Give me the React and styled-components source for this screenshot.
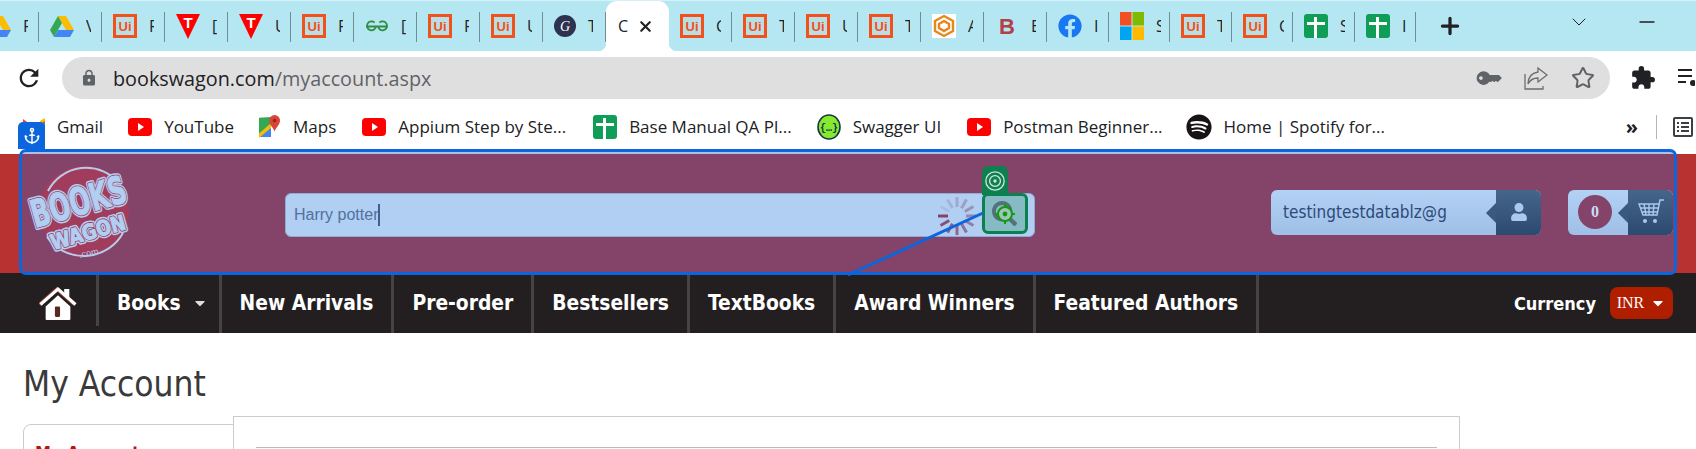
import React from 'react';
import styled, { createGlobalStyle } from 'styled-components';
import { Anchor, Minus, Plus, Star, X, ChevronDown } from 'lucide-react';
import { FaKey, FaSpotify, FaUser, FaFacebook, FaCaretDown, FaSearch } from 'react-icons/fa';
import { MdExtension, MdLock, MdRefresh } from 'react-icons/md';

const GlobalStyle = createGlobalStyle`
  html, body { margin: 0; padding: 0; background: #fff; overflow: hidden; }
  body { font-family: "Open Sans", "Liberation Sans", sans-serif; }
`;

const Page = styled.div`
  position: relative;
  width: 1696px;
  height: 449px;
  overflow: hidden;
`;

/* browser chrome */
const TabStrip = styled.div`
  display: flex;
  align-items: center;
  height: 51px;
  margin-left: -24px;
  width: 1720px;
  background: #b5e7f3;
  border-top: 1px solid #d6f1f7;
  box-sizing: border-box;
`;

const Tab = styled.div`
  position: relative;
  flex: none;
  display: flex;
  align-items: center;
  box-sizing: border-box;
  width: ${p => p.$w || 63}px;
  height: 50px;
  padding: 0 0 0 11px;
  color: #202124;
  font-size: 16px;
  ${p => !p.$active && `
    &::after {
      content: '';
      position: absolute;
      right: 0;
      top: 11px;
      width: 1px;
      height: 30px;
      background: #6f8d95;
    }
  `}
  ${p => p.$active && `
    background: #fff;
    border-radius: 11px 11px 0 0;
    &::before, &::after {
      content: '';
      position: absolute;
      bottom: 0;
      width: 8px;
      height: 8px;
    }
    &::before { left: -8px; background: radial-gradient(circle at 0 0, transparent 8px, #fff 8.5px); }
    &::after { right: -8px; background: radial-gradient(circle at 100% 0, transparent 8px, #fff 8.5px); }
  `}
`;

const TabLabel = styled.span`
  display: block;
  flex: none;
  width: ${p => (p.$active ? 11 : 5)}px;
  margin-left: ${p => (p.$active ? 1 : 12)}px;
  overflow: hidden;
  white-space: nowrap;
  line-height: 18px;
`;

const CloseIcon = styled(X)`
  margin-left: 8px;
  flex: none;
  color: #202124;
`;

const NewTab = styled(Plus)`
  flex: none;
  margin-left: 21px;
  color: #202124;
`;

const WindowControls = styled.div`
  display: flex;
  align-items: center;
  margin-left: 104px;
  gap: 44px;
  color: #202124;
  position: relative;
  top: -4px;
`;

const AddressRow = styled.div`
  display: flex;
  align-items: center;
  height: 48px;
  box-sizing: border-box;
  padding: 6px 0 0 15px;
`;

const Omnibox = styled.div`
  display: flex;
  align-items: center;
  box-sizing: border-box;
  width: 1548px;
  height: 42px;
  margin-left: 19px;
  padding: 0 15px 0 18px;
  border-radius: 21px;
  background: #dfdfdf;
  color: #5f6368;
`;

const Url = styled.div`
  margin-left: 15px;
  font-size: 19.8px;
  color: #5f6368;
  flex: 1;
  b { font-weight: 400; color: #202124; }
`;

const OmniIcons = styled.div`
  display: flex;
  align-items: center;
  gap: 26px;
`;

const OmniStar = styled(Star)`
  margin-left: -3px;
`;

const ToolIcons = styled.div`
  display: flex;
  align-items: center;
  gap: 22px;
  margin-left: 20px;
  color: #202124;
`;

const BookmarkBar = styled.div`
  display: flex;
  align-items: center;
  height: 55px;
  padding-left: 23px;
  box-sizing: border-box;
`;

const Bookmark = styled.div`
  display: flex;
  align-items: center;
  gap: 12px;
  margin-right: ${p => p.$gap || 26}px;
  font-size: 17px;
  color: #202124;
  white-space: nowrap;
`;

const BarEnd = styled.div`
  display: flex;
  align-items: center;
  margin-left: auto;
  padding-right: 3px;
  color: #202124;
  font-size: 20px;
  font-weight: 700;
`;

const BarDivider = styled.span`
  width: 1px;
  height: 24px;
  margin: 0 16px 0 18px;
  background: #b5b5b5;
`;

/* site header */
const Header = styled.header`
  height: 119px;
  background: #b83232;
`;

const HeaderInner = styled.div`
  position: relative;
  z-index: 2;
  display: flex;
  align-items: center;
  height: 100%;
  padding-left: 23px;
  box-sizing: border-box;
`;

const LogoWrap = styled.div`
  flex: none;
  width: 112px;
  height: 100px;
  margin-top: -2px;
`;

const SearchBox = styled.div`
  position: relative;
  flex: none;
  display: flex;
  align-items: center;
  box-sizing: border-box;
  width: 750px;
  height: 44px;
  margin: 3px 0 0 150px;
  padding-left: 8px;
  background: #b0cff3;
  border: 1px solid #8eabd0;
  border-radius: 6px;
  color: #53709f;
  font: 16px "Liberation Sans", sans-serif;
`;

const Caret = styled.span`
  width: 2px;
  height: 22px;
  background: #3f5f92;
`;

const SpinnerWrap = styled.svg`
  position: absolute;
  left: 651px;
  top: 2px;
`;

const TargetBox = styled.div`
  position: absolute;
  z-index: 4;
  right: 6px;
  top: -1px;
  width: 46px;
  height: 41px;
  box-sizing: border-box;
  display: flex;
  align-items: center;
  justify-content: center;
  background: #85bcc4;
  border: 3px solid #0d8050;
  border-radius: 6px;
`;

const TargetTab = styled.div`
  position: absolute;
  z-index: 3;
  right: 26px;
  top: -28px;
  width: 26px;
  height: 29px;
  display: flex;
  align-items: center;
  justify-content: center;
  background: #0d8050;
  border-radius: 6px 6px 0 0;
`;

const MagnifierWrap = styled.div`
  position: relative;
  width: 26px;
  height: 26px;
  color: #55707f;
  svg { position: absolute; left: 0; top: 0; }
`;

const Pill = styled.div`
  flex: none;
  display: flex;
  box-sizing: border-box;
  height: 45px;
  width: ${p => p.$width}px;
  margin-left: ${p => p.$left}px;
  margin-top: -3px;
  border-radius: 6px;
  overflow: hidden;
  background: linear-gradient(#b2d1f5, #a0bfe6);
`;

const PillBody = styled.div`
  flex: 1;
  display: flex;
  align-items: center;
  padding-left: ${p => p.$pad}px;
  color: #2d4a78;
  font: 17px "DejaVu Sans Condensed", "DejaVu Sans", sans-serif;
`;

const PillEnd = styled.div`
  position: relative;
  flex: none;
  display: flex;
  align-items: center;
  justify-content: center;
  width: 45px;
  color: #a9c9ee;
  background: linear-gradient(#46658b, #2c4a70);
  &::before {
    content: '';
    position: absolute;
    left: -10px;
    top: 13px;
    border-style: solid;
    border-width: 10px 10px 10px 0;
    border-color: transparent #3a597f transparent transparent;
  }
`;

const CartCount = styled.div`
  width: 34px;
  height: 34px;
  border-radius: 50%;
  background: #84446a;
  color: #c9dcf3;
  display: flex;
  align-items: center;
  justify-content: center;
  font: 700 16px "Liberation Serif", serif;
`;

const Highlight = styled.div`
  position: absolute;
  z-index: 1;
  left: 19px;
  top: 149px;
  width: 1658px;
  height: 126px;
  box-sizing: border-box;
  border: 3px solid #0b66dd;
  border-radius: 7px;
  background: rgba(54, 95, 190, 0.4);
`;

const AnchorBadge = styled.div`
  position: absolute;
  z-index: 5;
  left: 18px;
  top: 122px;
  width: 27px;
  height: 27px;
  display: flex;
  align-items: center;
  justify-content: center;
  background: #0b66dd;
  border-radius: 5px 5px 0 0;
  color: #fff;
`;

const LinkLine = styled.svg`
  position: absolute;
  z-index: 5;
  left: 840px;
  top: 205px;
`;

/* nav */
const Nav = styled.nav`
  display: flex;
  align-items: stretch;
  height: 60px;
  background: #231f20;
  color: #fff;
  font: 700 20.8px "DejaVu Sans Condensed", "DejaVu Sans", sans-serif;
`;

const HomeCell = styled.div`
  flex: none;
  width: 99px;
  height: 53px;
  box-sizing: border-box;
  display: flex;
  align-items: center;
  padding: 7px 0 0 39px;
  border-right: 3px solid #444;
`;

const NavItem = styled.div`
  flex: none;
  display: flex;
  align-items: center;
  gap: 11px;
  padding: 0 ${p => p.$right ?? 18}px 0 18px;
  border-right: 3px solid #444;
  white-space: nowrap;
`;

const Currency = styled.div`
  margin-left: auto;
  display: flex;
  align-items: center;
  gap: 14px;
  padding-right: 23px;
  font-size: 18px;
`;

const CurrencyButton = styled.div`
  display: flex;
  align-items: center;
  justify-content: center;
  gap: 6px;
  width: 63px;
  height: 32px;
  border-radius: 8px;
  background: #b01e00;
  font: 400 16px "Liberation Serif", serif;
`;

/* page body */
const Main = styled.main`
  padding-left: 23px;
`;

const Title = styled.h1`
  margin: 0;
  height: 83px;
  padding-top: 29px;
  box-sizing: border-box;
  font: 400 35px/44px "DejaVu Sans Condensed", "DejaVu Sans", sans-serif;
  color: #3a3a3a;
`;

const Columns = styled.div`
  display: flex;
  align-items: flex-start;
`;

const SideCard = styled.div`
  flex: none;
  width: 230px;
  height: 100px;
  margin-top: 8px;
  box-sizing: border-box;
  padding: 18px 0 0 11px;
  border: 1px solid #ccc;
  border-radius: 8px 0 0 0;
  color: #b01818;
  font: 700 16px "DejaVu Sans", sans-serif;
`;

const ContentPanel = styled.div`
  position: relative;
  flex: none;
  width: 1227px;
  height: 120px;
  margin-left: -20px;
  box-sizing: border-box;
  padding: 30px 22px 0 22px;
  background: #fff;
  border: 1px solid #ccc;
`;

const PanelRule = styled.div`
  border-top: 1px solid #bbb;
`;

/* favicons */
const UiMark = styled.span`
  flex: none;
  width: 24px;
  height: 24px;
  box-sizing: border-box;
  border: 3px solid #f1511b;
  background: #b9dfe6;
  color: #f1511b;
  display: flex;
  align-items: center;
  justify-content: center;
  font: 700 13px "Liberation Sans", sans-serif;
`;

const SheetMark = styled.span`
  flex: none;
  display: block;
  position: relative;
  width: 24px;
  height: 24px;
  border-radius: 3px;
  background: #0f9d58;
  &::before, &::after { content: ''; position: absolute; background: #fff; }
  &::before { left: 3px; right: 3px; top: 8px; height: 3px; }
  &::after { left: 10px; top: 3px; bottom: 0; width: 3px; }
`;

const IconBox = styled.svg`
  flex: none;
  display: block;
`;

const Drive = () => (
  <IconBox width="24" height="24" viewBox="0 0 24 24">
    <path d="M8 2h8l8 14h-8z" fill="#fbbc04" />
    <path d="M8 2l4 7-8 14-4-7z" fill="#34a853" />
    <path d="M8 16h16l-4 7H4z" fill="#4285f4" />
  </IconBox>
);

const TMark = () => (
  <IconBox width="24" height="26" viewBox="0 0 24 26">
    <path d="M0 1h24L12 26z" fill="#f00" />
    <text x="12" y="15" textAnchor="middle" fontFamily="Liberation Sans" fontWeight="700" fontSize="15" fill="#fff">T</text>
  </IconBox>
);

const Gfg = () => (
  <IconBox width="24" height="24" viewBox="0 0 24 24" fill="none" stroke="#2f8d46" strokeWidth="1.8">
    <path d="M11 12a4.5 4.5 0 1 1-1.4-3.4M13 12a4.5 4.5 0 1 0 1.4-3.4M1 12.5h22" />
  </IconBox>
);

const DarkG = () => (
  <IconBox width="22" height="24" viewBox="0 0 22 24">
    <circle cx="11" cy="12" r="11" fill="#2d3250" />
    <text x="11" y="17" textAnchor="middle" fontFamily="Liberation Serif" fontStyle="italic" fontSize="14" fill="#fff">G</text>
  </IconBox>
);

const Hexa = () => (
  <IconBox width="24" height="24" viewBox="0 0 24 24">
    <rect width="24" height="24" fill="#fff" />
    <path d="M12 2l9 5v10l-9 5-9-5V7zM12 7l-5 3v4l5 3 5-3v-4z" fill="none" stroke="#e8871e" strokeWidth="2.4" />
  </IconBox>
);

const BMark = () => (
  <IconBox width="24" height="24" viewBox="0 0 24 24">
    <text x="12" y="20" textAnchor="middle" fontFamily="Liberation Sans" fontWeight="700" fontSize="22" fill="#b2404a">B</text>
  </IconBox>
);

const MsMark = () => (
  <IconBox width="24" height="28" viewBox="0 0 24 28">
    <rect width="11.5" height="13.5" fill="#f25022" />
    <rect x="12.5" width="11.5" height="13.5" fill="#7fba00" />
    <rect y="14.5" width="11.5" height="13.5" fill="#00a4ef" />
    <rect x="12.5" y="14.5" width="11.5" height="13.5" fill="#ffb900" />
  </IconBox>
);

const Youtube = () => (
  <IconBox width="24" height="18" viewBox="0 0 24 18">
    <rect width="24" height="18" rx="4" fill="#f00" />
    <path d="M10 5l6 4-6 4z" fill="#fff" />
  </IconBox>
);

const Gmail = () => (
  <IconBox width="22" height="18" viewBox="0 0 22 18">
    <rect width="22" height="18" fill="#fff" />
    <path d="M0 2l5 4v12H1a1 1 0 0 1-1-1z" fill="#4285f4" />
    <path d="M22 2l-5 4v12h4a1 1 0 0 0 1-1z" fill="#34a853" />
    <path d="M0 1l11 8 11-8v3L11 12 0 4z" fill="#ea4335" />
    <path d="M17 3l5-3v3l-5 3z" fill="#fbbc04" />
  </IconBox>
);

const Maps = () => (
  <IconBox width="22" height="26" viewBox="0 0 24 26">
    <path d="M0 3l13-1v22H0z" fill="#34a853" />
    <path d="M0 24l13-11v11z" fill="#4285f4" />
    <path d="M0 20L13 9v5L0 25z" fill="#fbbc04" />
    <path d="M17 0a6 6 0 0 1 6 6c0 4-4 7-6 12-2-5-6-8-6-12a6 6 0 0 1 6-6z" fill="#db4437" />
    <circle cx="17" cy="6" r="2" fill="#8c2a20" />
  </IconBox>
);

const Swagger = () => (
  <IconBox width="24" height="26" viewBox="0 0 24 26">
    <ellipse cx="12" cy="13" rx="11" ry="12" fill="#85ea2d" stroke="#173647" strokeWidth="1.6" />
    <text x="12" y="17" textAnchor="middle" fontFamily="Liberation Mono" fontWeight="700" fontSize="10" fill="#173647">{'{…}'}</text>
  </IconBox>
);

const ReadingList = () => (
  <IconBox width="20" height="20" viewBox="0 0 20 20" fill="none" stroke="#3c4043" strokeWidth="2">
    <rect x="1" y="1" width="18" height="18" rx="1" />
    <path d="M4 6h2M8 6h8M4 10h2M8 10h8M4 14h2M8 14h8" />
  </IconBox>
);

const QueueIcon = () => (
  <IconBox width="17" height="22" viewBox="0 0 17 22" fill="none" stroke="#202124" strokeWidth="2">
    <path d="M0 3h14M0 9h14M0 15h8" />
    <circle cx="15" cy="16" r="3" fill="#202124" stroke="none" />
  </IconBox>
);

const ShareIcon = () => (
  <IconBox width="24" height="24" viewBox="0 0 24 24" fill="none" stroke="#6a6d70" strokeWidth="1.3">
    <path d="M1 8v15h18v-3" />
    <path d="M14 2l9 7-9 7v-4c-5 0-8 2-10 6 0-7 4-11 10-12z" />
  </IconBox>
);

const CartIcon = () => (
  <IconBox width="28" height="26" viewBox="0 0 28 26" fill="none" stroke="#a9c9ee" strokeWidth="1.4">
    <path d="M27 1h-4l-3 15H6L2 5h20M4 9h17M5 13h15M7 5l2 11M12 5v11M17 5l-1 11" />
    <circle cx="8" cy="22" r="2" fill="#a9c9ee" stroke="none" />
    <circle cx="18" cy="22" r="2" fill="#a9c9ee" stroke="none" />
  </IconBox>
);

const HomeIcon = () => (
  <IconBox width="38" height="35" viewBox="0 0 36 34">
    <path d="M24 3h5v10l-5-4z" fill="#fff" />
    <path d="M1 18L18 3l17 15" fill="none" stroke="#a5432f" strokeWidth="3.4" transform="translate(-1 0)" />
    <path d="M1 18L18 3l17 15" fill="none" stroke="#fff" strokeWidth="3" />
    <path d="M6 20L18 9l12 11v12a1 1 0 0 1-1 1H7a1 1 0 0 1-1-1z" fill="#fff" />
    <rect x="15" y="20" width="5" height="10" rx="1" fill="#5a2a22" />
  </IconBox>
);

const logoType = { fontFamily: 'DejaVu Sans Condensed, DejaVu Sans', fontWeight: 700 };

// three passes of the same word give the light letter, the red gap and the light rim
const LogoWord = ({ x, y, size, length, children }) => (
  <g transform={`translate(${x} ${y}) rotate(-16)`} style={logoType} fontSize={size}>
    {[['#b0cff3', 5.6], ['#a23c5c', 2.6], ['#b0cff3', 1]].map(([color, width]) => (
      <text
        key={width}
        textLength={length}
        lengthAdjust="spacingAndGlyphs"
        fill={color}
        stroke={color}
        strokeWidth={width}
        strokeLinejoin="round"
      >
        {children}
      </text>
    ))}
  </g>
);

const BooksWagonLogo = () => (
  <svg width="112" height="100" viewBox="0 0 112 100">
    <circle cx="61" cy="48" r="45" fill="#a23c5c" />
    <path d="M25 28A43 43 0 0 1 96 20" fill="none" stroke="#b7cbe8" strokeWidth="2" />
    <path d="M24 74A45 45 0 0 0 100 70" fill="none" stroke="#b7cbe8" strokeWidth="2" />
    <LogoWord x={12} y={65} size={38} length={98}>BOOKS</LogoWord>
    <LogoWord x={30} y={87} size={21} length={77}>WAGON</LogoWord>
    <text x="56" y="93" fontSize="10" fontFamily="Liberation Serif" fill="#b0cff3" transform="rotate(-12 66 90)">.com</text>
  </svg>
);

const Spinner = () => (
  <SpinnerWrap width="40" height="40" viewBox="-20 -20 40 40">
    {Array.from({ length: 12 }).map((_, i) => (
      <rect
        key={i}
        x="-19"
        y="-1.5"
        width="10"
        height="3"
        fill="#84446a"
        opacity={Math.max(1 - i * 0.08, 0.12)}
        transform={`rotate(${-i * 30})`}
      />
    ))}
  </SpinnerWrap>
);

const TargetMark = ({ color, size }) => (
  <svg width={size} height={size} viewBox="0 0 24 24" fill="none" stroke={color} strokeWidth="1.6">
    <circle cx="12" cy="12" r="11" />
    <circle cx="12" cy="12" r="6.5" />
    <circle cx="12" cy="12" r="2" fill={color} stroke="none" />
  </svg>
);

const LocatorMark = () => (
  <svg width="20" height="20" viewBox="0 0 20 20" fill="none" stroke="#16980f" strokeWidth="2" style={{ left: 3, top: 3 }}>
    <circle cx="10" cy="10" r="7" fill="#9cc6b8" />
    <circle cx="10" cy="10" r="2.4" fill="#16980f" stroke="none" />
    <path d="M10 0v3M10 17v3M0 10h3M17 10h3" />
  </svg>
);

const favicons = {
  drive: <Drive />,
  ui: <UiMark>Ui</UiMark>,
  t: <TMark />,
  gfg: <Gfg />,
  g: <DarkG />,
  hex: <Hexa />,
  b: <BMark />,
  fb: <FaFacebook size={24} color="#1877f2" style={{ flex: 'none' }} />,
  ms: <MsMark />,
  sheet: <SheetMark />,
};

const tabs = [
  ['drive', 'F'], ['drive', 'V'], ['ui', 'F'], ['t', '['], ['t', 'U'], ['ui', 'F'], ['gfg', '['],
  ['ui', 'F'], ['ui', 'U'], ['g', 'T'],
];

const tabsAfter = [
  ['ui', 'C', 63], ['ui', 'T', 63], ['ui', 'U', 63], ['ui', 'T', 63], ['hex', 'A', 63], ['b', 'E', 63],
  ['fb', 'I', 62], ['ms', 'S', 61], ['ui', 'T', 62], ['ui', 'C', 61], ['sheet', 'S', 62], ['sheet', 'I', 61],
];

const navLinks = ['New Arrivals', 'Pre-order', 'Bestsellers', 'TextBooks', 'Award Winners', 'Featured Authors'];

const App = () => (
  <Page>
    <GlobalStyle />
    <TabStrip>
      {tabs.map(([icon, label], i) => (
        <Tab key={i}>
          {favicons[icon]}
          <TabLabel>{label}</TabLabel>
        </Tab>
      ))}
      <Tab $active>
        <TabLabel $active>C</TabLabel>
        <CloseIcon size={17} strokeWidth={3} />
      </Tab>
      {tabsAfter.map(([icon, label, w], i) => (
        <Tab key={i} $w={w}>
          {favicons[icon]}
          <TabLabel>{label}</TabLabel>
        </Tab>
      ))}
      <NewTab size={26} strokeWidth={3} />
      <WindowControls>
        <ChevronDown size={24} strokeWidth={1} />
        <Minus size={24} strokeWidth={1.4} />
      </WindowControls>
    </TabStrip>

    <AddressRow>
      <MdRefresh size={28} color="#202124" />
      <Omnibox>
        <MdLock size={18} />
        <Url><b>bookswagon.com</b>/myaccount.aspx</Url>
        <OmniIcons>
          <FaKey size={20} style={{ transform: 'scaleX(-1) rotate(45deg)' }} />
          <ShareIcon />
          <OmniStar size={24} strokeWidth={2} />
        </OmniIcons>
      </Omnibox>
      <ToolIcons>
        <MdExtension size={26} />
        <QueueIcon />
      </ToolIcons>
    </AddressRow>

    <BookmarkBar>
      <Bookmark $gap={25}><Gmail />Gmail</Bookmark>
      <Bookmark $gap={25}><Youtube />YouTube</Bookmark>
      <Bookmark $gap={26}><Maps />Maps</Bookmark>
      <Bookmark $gap={27}><Youtube />Appium Step by Ste...</Bookmark>
      <Bookmark $gap={25}><SheetMark />Base Manual QA Pl...</Bookmark>
      <Bookmark $gap={26}><Swagger />Swagger UI</Bookmark>
      <Bookmark $gap={23}><Youtube />Postman Beginner...</Bookmark>
      <Bookmark><FaSpotify size={26} color="#191414" />Home | Spotify for...</Bookmark>
      <BarEnd>»<BarDivider /><ReadingList /></BarEnd>
    </BookmarkBar>

    <Header>
      <HeaderInner>
        <LogoWrap><BooksWagonLogo /></LogoWrap>
        <SearchBox>
          Harry potter<Caret />
          <Spinner />
          <TargetTab><TargetMark color="#cfe6da" size={20} /></TargetTab>
          <TargetBox>
            <MagnifierWrap>
              <FaSearch size={25} />
              <LocatorMark />
            </MagnifierWrap>
          </TargetBox>
        </SearchBox>
        <Pill $width={270} $left={236}>
          <PillBody $pad={12}>testingtestdatablz@g</PillBody>
          <PillEnd><FaUser size={18} /></PillEnd>
        </Pill>
        <Pill $width={105} $left={27}>
          <PillBody $pad={10}><CartCount>0</CartCount></PillBody>
          <PillEnd><CartIcon /></PillEnd>
        </Pill>
      </HeaderInner>
    </Header>

    <Nav>
      <HomeCell><HomeIcon /></HomeCell>
      <NavItem $right={11}>Books <FaCaretDown size={16} color="#ddd" /></NavItem>
      {navLinks.map(label => <NavItem key={label}>{label}</NavItem>)}
      <Currency>
        Currency
        <CurrencyButton>INR <FaCaretDown size={16} /></CurrencyButton>
      </Currency>
    </Nav>

    <Main>
      <Title>My Account</Title>
      <Columns>
        <SideCard>My Account</SideCard>
        <ContentPanel><PanelRule /></ContentPanel>
      </Columns>
    </Main>

    <Highlight />
    <AnchorBadge><Anchor size={18} strokeWidth={2} /></AnchorBadge>
    <LinkLine width="150" height="75" viewBox="0 0 150 75">
      <path d="M143 8L8 70" stroke="#0b66dd" strokeWidth="3" />
    </LinkLine>
  </Page>
);

export default App;
